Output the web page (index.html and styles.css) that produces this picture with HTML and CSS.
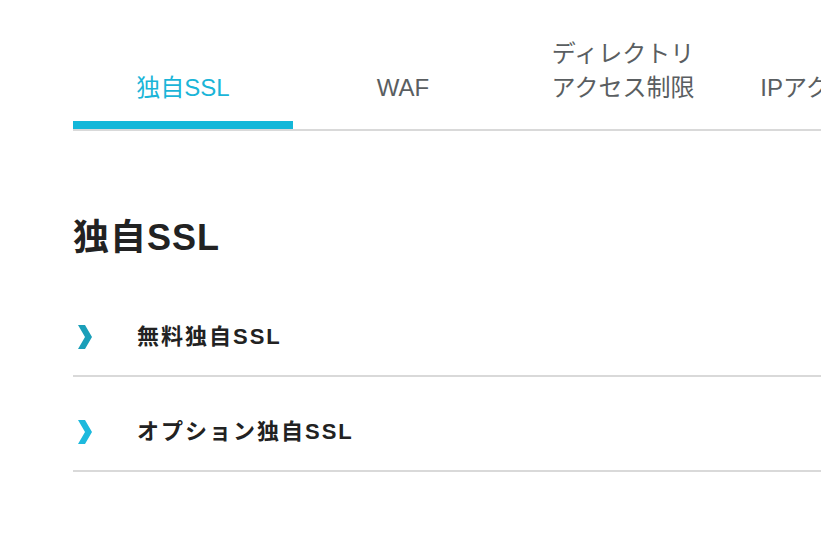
FILE: index.html
```html
<!DOCTYPE html>
<html lang="ja">
<head>
    <meta charset="UTF-8">
    <meta name="viewport" content="width=device-width, initial-scale=1.0">
    <title>独自SSL</title>
    <link rel="stylesheet" href="styles.css">
</head>
<body>
    <div class="page">
        <ul class="tabs">
            <li class="tab active">独自SSL</li>
            <li class="tab">WAF</li>
            <li class="tab">ディレクトリ<br>アクセス制限</li>
            <li class="tab">IPアクセス制限</li>
        </ul>

        <h1 class="title">独自SSL</h1>

        <ul class="links">
            <li class="link-row">
                <span class="chevron dark">
                    <svg width="14" height="24" viewBox="0 0 14 24"><polygon points="0,0 7,0 14,12 7,24 0,24 7,12" /></svg>
                </span>
                <span class="link-text">無料独自SSL</span>
            </li>
            <li class="link-row">
                <span class="chevron">
                    <svg width="14" height="24" viewBox="0 0 14 24"><polygon points="0,0 7,0 14,12 7,24 0,24 7,12" /></svg>
                </span>
                <span class="link-text">オプション独自SSL</span>
            </li>
        </ul>
    </div>
</body>
</html>
```
FILE: styles.css
```css
html, body {
    margin: 0;
    overflow: hidden;
    background: #fff;
}
body {
    font-family: "Liberation Sans", "Noto Sans CJK JP", sans-serif;
    color: #222;
}
.page {
    padding-left: 73px;
}
.tabs {
    display: flex;
    align-items: flex-end;
    list-style: none;
    margin: 37px 0 0;
    padding: 0;
    border-bottom: 2px solid #d9d9d9;
}
.tab {
    flex: 0 0 220px;
    text-align: center;
    font-size: 24px;
    line-height: 34px;
    color: #5a5e61;
    padding-bottom: 16px;
    border-bottom: 8px solid transparent;
}
.tab.active {
    color: #1ab5d8;
    border-bottom-color: #13b7d9;
}
.title {
    margin: 82px 0 19px;
    font-size: 36px;
    line-height: 50px;
    font-weight: bold;
    letter-spacing: 1px;
    color: #222;
}
.links {
    list-style: none;
    margin: 0;
    padding: 0;
}
.link-row {
    display: flex;
    align-items: center;
    padding: 38px 0 22px;
    border-bottom: 2px solid #d9d9d9;
}
.chevron {
    flex: 0 0 64px;
    display: flex;
    padding-left: 5px;
    box-sizing: border-box;
}
.chevron svg {
    fill: #1db9dd;
}
.chevron.dark svg {
    fill: #1a9fb9;
}
.link-text {
    font-size: 22px;
    line-height: 33px;
    font-weight: bold;
    letter-spacing: 2px;
    color: #222;
}
```
